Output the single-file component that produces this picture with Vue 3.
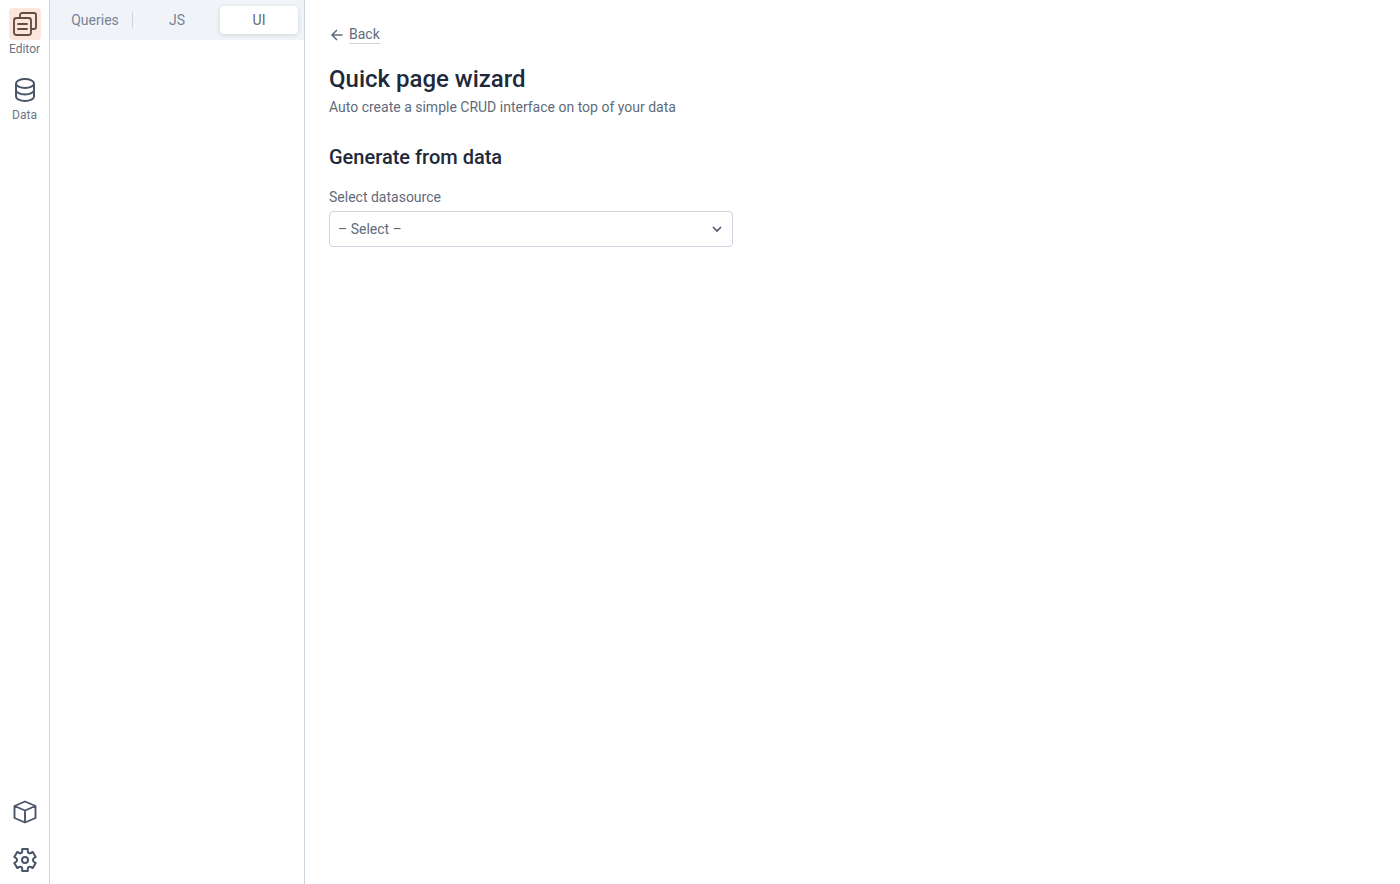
<script setup>
import { ref } from 'vue'

const tabs = ['Queries', 'JS', 'UI']
const activeTab = ref('UI')
const datasource = ref('')
</script>

<template>
  <div class="app">
    <nav class="sidebar" aria-label="Main">
      <button class="nav-item" type="button">
        <span class="nav-icon selected">
          <svg viewBox="0 0 24 24" width="24" height="24" fill="none" stroke="currentColor" stroke-width="1.900" stroke-linecap="round" stroke-linejoin="round">
            <path d="M7 5.500V3a2 2 0 0 1 2-2h12a2 2 0 0 1 2 2v12a2 2 0 0 1-2 2h-2.500" />
            <rect x="1" y="6" width="17" height="17" rx="2.500" />
            <path d="M5 12h9M5 17h9" />
          </svg>
        </span>
        <span>Editor</span>
      </button>
      <button class="nav-item" type="button">
        <span class="nav-icon">
          <svg viewBox="0 0 24 24" width="24" height="24" fill="none" stroke="currentColor" stroke-width="2">
            <ellipse cx="12" cy="5.500" rx="9" ry="4.500" />
            <path d="M3 5.500v13C3 21 7 23 12 23s9-2 9-4.500v-13M3 12c0 2.500 4 4.500 9 4.500s9-2 9-4.500" />
          </svg>
        </span>
        <span>Data</span>
      </button>
      <div class="nav-bottom">
        <button class="nav-item" type="button" aria-label="Libraries">
          <span class="nav-icon">
            <svg viewBox="0 0 24 24" width="24" height="24" fill="none" stroke="currentColor" stroke-width="1.900" stroke-linejoin="round">
              <path d="M12 1.500 22.500 6v12L12 22.500 1.500 18V6zM1.500 6 12 10.500 22.500 6M12 10.500v12" />
            </svg>
          </span>
        </button>
        <button class="nav-item" type="button" aria-label="Settings">
          <span class="nav-icon">
            <svg viewBox="0 0 24 24" width="24" height="24" fill="none" stroke="currentColor" stroke-width="2" stroke-linejoin="round">
              <path d="M9.200 1h5.600v2.500q0 1 1 1.500t2 0l2-1 2.900 5-1.800 1.200q-1 .8-1 1.800t1 1.800l1.800 1.200-2.900 5-2-1q-1-.5-2 0t-1 1.500V23H9.200v-2.500q0-1-1-1.500t-2 0l-2 1-2.900-5 1.800-1.200q1-.8 1-1.800t-1-1.800L1.300 9l2.900-5 2 1q1 .5 2 0t1-1.500z" />
              <circle cx="12" cy="12" r="3" />
            </svg>
          </span>
        </button>
      </div>
    </nav>

    <aside class="explorer">
      <div class="tabs" role="tablist">
        <button
          v-for="tab in tabs"
          :key="tab"
          class="tab"
          :class="{ active: tab === activeTab, divided: tab === 'Queries' }"
          type="button"
          role="tab"
          :aria-selected="tab === activeTab"
          @click="activeTab = tab"
        >{{ tab }}</button>
      </div>
    </aside>

    <main class="content">
      <a class="back" href="#">
        <svg viewBox="0 0 16 16" width="16" height="16" fill="none" stroke="currentColor" stroke-width="1.500">
          <path d="M13.500 8H3M8 3 3 8l5 5" />
        </svg>
        <span>Back</span>
      </a>
      <h1>Quick page wizard</h1>
      <p>Auto create a simple CRUD interface on top of your data</p>
      <h2>Generate from data</h2>
      <label for="datasource">Select datasource</label>
      <div class="select">
        <select id="datasource" v-model="datasource">
          <option value="">– Select –</option>
        </select>
        <svg viewBox="0 0 16 16" width="16" height="16" fill="none" stroke="currentColor" stroke-width="1.600">
          <path d="m4 6 4 4 4-4" />
        </svg>
      </div>
    </main>
  </div>
</template>

<style>
body {
  margin: 0;
  background: #fff;
}
</style>

<style scoped>
.app {
  display: flex;
  min-height: 100vh;
  font-family: Roboto, "Liberation Sans", sans-serif;
  font-size: 14px;
  line-height: 20px;
  color: #4c5664;
}
button {
  border: 0;
  padding: 0;
  background: none;
  font: inherit;
  color: inherit;
  cursor: pointer;
}
svg {
  display: block;
}
.sidebar {
  box-sizing: border-box;
  width: 50px;
  flex: none;
  display: flex;
  flex-direction: column;
  gap: 16px;
  padding: 8px 0;
  border-right: 1px solid #cdd5df;
}
.nav-item {
  display: flex;
  flex-direction: column;
  align-items: center;
  gap: 1px;
  font-size: 12px;
  line-height: 17px;
  color: #6a7585;
}
.nav-icon {
  display: grid;
  place-items: center;
  width: 32px;
  height: 32px;
  border-radius: 4px;
  color: #4a5568;
}
.nav-icon.selected {
  background: #fbe6dc;
  color: #664c40;
}
.nav-bottom {
  display: flex;
  flex-direction: column;
  gap: 16px;
  margin-top: auto;
}
.explorer {
  box-sizing: border-box;
  width: 255px;
  flex: none;
  border-right: 1px solid #cdd5df;
}
.tabs {
  display: flex;
  gap: 4px;
  padding: 6px;
  background: #f0f4f8;
}
.tab {
  position: relative;
  flex: 1;
  height: 28px;
  border-radius: 4px;
  color: #768396;
}
.tab.active {
  background: #fff;
  color: #5f6b7a;
  box-shadow: 0 1px 4px rgba(76, 86, 100, 0.2);
}
.tab.divided::after {
  content: "";
  position: absolute;
  top: 6px;
  right: 1px;
  width: 1px;
  height: 16px;
  background: #cdd5df;
}
.content {
  flex: 1;
  min-width: 0;
  padding: 25px 24px 24px;
}
.back {
  display: flex;
  width: fit-content;
  align-items: center;
  gap: 4px;
  color: #5f6b7a;
  text-decoration: none;
}
.back span {
  line-height: 18px;
  border-bottom: 1px solid #cdd5df;
}
h1,
h2,
p {
  margin: 0;
}
h1 {
  margin-top: 20px;
  font-size: 24px;
  line-height: 30px;
  font-weight: 500;
  color: #1e293b;
}
p {
  margin-top: 3px;
  color: #5f6b7a;
}
h2 {
  margin-top: 28px;
  font-size: 20px;
  line-height: 24px;
  font-weight: 500;
  color: #1e293b;
}
label {
  display: block;
  margin-top: 18px;
  color: #5f6b7a;
}
.select {
  position: relative;
  max-width: 404px;
  margin-top: 4px;
}
select {
  appearance: none;
  display: block;
  box-sizing: border-box;
  width: 100%;
  height: 36px;
  padding: 0 32px 0 8px;
  border: 1px solid #cdd5df;
  border-radius: 4px;
  background: #fff;
  font: inherit;
  color: #5f6b7a;
}
.select svg {
  position: absolute;
  top: 10px;
  right: 8px;
  pointer-events: none;
}
</style>
